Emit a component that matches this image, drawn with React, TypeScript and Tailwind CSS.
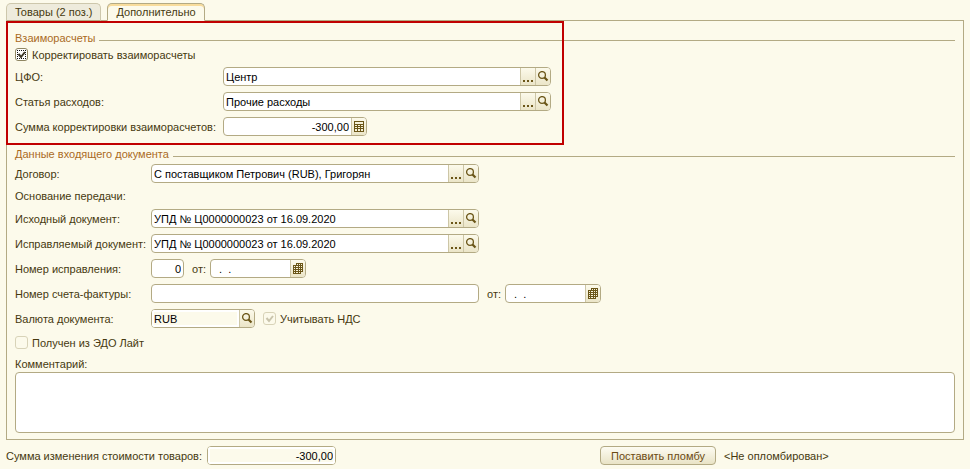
import React, { useState } from 'react';
import clsx from 'clsx';

const SearchIcon = () => (
  <svg width="12" height="12" viewBox="0 0 12 12" fill="none" stroke="#6b5618">
    <circle cx="5" cy="4" r="3.4" strokeWidth="1.3" />
    <path d="M7.5 6.5L10.5 9.5" strokeWidth="2.2" />
  </svg>
);

const DotsIcon = () => (
  <svg width="10" height="12" viewBox="0 0 10 12" fill="#6b5618">
    <path d="M0 9h2v2H0zM4 9h2v2H4zM8 9h2v2H8z" />
  </svg>
);

const CalculatorIcon = () => (
  <svg width="10" height="11" viewBox="0 0 10 11" shapeRendering="crispEdges">
    <path d="M0 0h10v11H0z" fill="#6b5618" />
    <path
      d="M1 1h8v2H1zM1 4h2v1H1zM4 4h2v1H4zM7 4h2v1H7zM1 6h2v1H1zM4 6h2v1H4zM7 6h2v1H7zM1 8h2v2H1zM4 8h2v2H4zM7 8h2v2H7z"
      fill="#f7f3dc"
    />
  </svg>
);

const CalendarIcon = () => (
  <svg width="10" height="11" viewBox="0 0 10 11" shapeRendering="crispEdges">
    <path d="M3 0h7v9H8v2H0V2h3z" fill="#6b5618" />
    <path
      d="M4 1h1v1H4zM6 1h1v1H6zM8 1h1v1H8zM1 3h1v1H1zM3 3h2v1H3zM6 3h1v1H6zM8 3h1v1H8zM1 5h1v1H1zM3 5h2v1H3zM6 5h1v1H6zM8 5h1v1H8zM1 7h1v1H1zM3 7h2v1H3zM6 7h1v1H6zM8 7h1v1H8zM1 9h1v1H1zM3 9h2v1H3zM6 9h1v1H6z"
      fill="#f7f3dc"
    />
  </svg>
);

const ICONS = {
  dots: { icon: <DotsIcon />, title: 'Выбрать' },
  search: { icon: <SearchIcon />, title: 'Открыть' },
  calculator: { icon: <CalculatorIcon />, title: 'Калькулятор' },
  calendar: { icon: <CalendarIcon />, title: 'Календарь' },
};

interface FieldProps {
  id: string;
  value?: string;
  className: string;
  buttons?: (keyof typeof ICONS)[];
  alignRight?: boolean;
  readOnly?: boolean;
}

const Field: React.FC<FieldProps> = ({ id, value = '', className, buttons = [], alignRight, readOnly }) => (
  <div className={clsx('flex h-[19px] overflow-hidden rounded-[4px] border border-[#b3aa84] bg-white', className)}>
    <input
      id={id}
      type="text"
      defaultValue={value}
      readOnly={readOnly}
      className={clsx(
        'min-w-0 flex-1 px-0.5 text-black outline-none',
        alignRight && 'text-right',
        readOnly && 'bg-[#fcfaeb] shadow-[inset_0_0_0_2px_#fff]'
      )}
    />
    {buttons.map(name => (
      <button
        key={name}
        type="button"
        aria-label={ICONS[name].title}
        className="flex w-[15px] shrink-0 items-center justify-center border-l border-[#cdc6a6] bg-linear-to-b from-[#fcfaeb] to-[#ebe5c8]"
      >
        {ICONS[name].icon}
      </button>
    ))}
  </div>
);

interface RowProps {
  id: string;
  label: string;
  labelClass: string;
  children: React.ReactNode;
}

const Row: React.FC<RowProps> = ({ id, label, labelClass, children }) => (
  <div className="flex items-center">
    <label htmlFor={id} className={clsx('shrink-0 whitespace-nowrap', labelClass)}>{label}</label>
    {children}
  </div>
);

interface CheckboxProps {
  id: string;
  label: string;
  checked?: boolean;
  disabled?: boolean;
}

const Checkbox: React.FC<CheckboxProps> = ({ id, label, checked, disabled }) => (
  <div className="flex items-center gap-1">
    <span className="grid size-[13px] shrink-0">
      <input
        id={id}
        type="checkbox"
        defaultChecked={checked}
        disabled={disabled}
        className={clsx(
          'peer col-start-1 row-start-1 size-[13px] appearance-none rounded-[3px] border',
          disabled ? 'border-[#d8d3b8] bg-[#fcfaeb]' : 'border-[#8f8662] bg-white'
        )}
      />
      <svg
        viewBox="0 0 13 13"
        fill="none"
        className="pointer-events-none invisible col-start-1 row-start-1 size-[13px] peer-checked:visible"
      >
        {!disabled && (
          <path d="M2 2.5h9M2 10.5h9M2.5 2v9M10.5 2v9" stroke="#111" strokeDasharray="1 1" shapeRendering="crispEdges" />
        )}
        <path d="M3.5 6l2.5 3L10 4" stroke={disabled ? '#c9c4ac' : '#3d3727'} strokeWidth="2" />
      </svg>
    </span>
    <label htmlFor={id} className="whitespace-nowrap">{label}</label>
  </div>
);

const SectionTitle: React.FC<{ children: React.ReactNode }> = ({ children }) => (
  <div className="flex h-5 items-center gap-1">
    <h2 className="whitespace-nowrap text-[#aa6a1e]">{children}</h2>
    <div className="mt-1 h-px flex-1 bg-[#b3aa84]" />
  </div>
);

const TABS = ['Товары (2 поз.)', 'Дополнительно'];

const App: React.FC = () => {
  const [activeTab, setActiveTab] = useState(1);

  return (
    <div className="min-h-screen bg-[#fcfaeb] px-1.5 pt-[3px] font-['Liberation_Sans',Arial,sans-serif] text-[11px] leading-[14px] text-[#46390f]">
      <div role="tablist" className="flex gap-1.5">
        {TABS.map((tab, index) => (
          <button
            key={tab}
            type="button"
            role="tab"
            aria-selected={activeTab === index}
            onClick={() => setActiveTab(index)}
            className={clsx(
              'relative z-10 h-[18px] overflow-hidden whitespace-nowrap rounded-t-[5px] border px-2',
              activeTab === index
                ? 'border-[#b3aa84] border-b-[#fcfaeb] bg-[#fcfaeb] shadow-[inset_0_2px_0_#f8dc9c]'
                : 'border-[#cdc7ac] border-b-[#b3aa84] bg-[#eeebdc]'
            )}
          >
            {tab}
          </button>
        ))}
      </div>

      <main className="relative -mt-px border border-[#b3aa84] px-2 pt-[7px] pb-1.5">
        <div className="pointer-events-none absolute -left-px top-0 h-[124px] w-[558px] border-2 border-[#c00000]" />

        <section>
          <SectionTitle>Взаиморасчеты</SectionTitle>
          <div className="flex flex-col gap-1.5">
            <div className="flex h-[13px] items-center">
              <Checkbox id="adjust" label="Корректировать взаиморасчеты" checked />
            </div>
            <Row id="center" label="ЦФО:" labelClass="w-[208px]">
              <Field id="center" value="Центр" className="w-[328px]" buttons={['dots', 'search']} />
            </Row>
            <Row id="expense" label="Статья расходов:" labelClass="w-[208px]">
              <Field id="expense" value="Прочие расходы" className="w-[328px]" buttons={['dots', 'search']} />
            </Row>
            <Row id="amount" label="Сумма корректировки взаиморасчетов:" labelClass="w-[208px]">
              <Field id="amount" value="-300,00" className="w-36" buttons={['calculator']} alignRight />
            </Row>
          </div>
        </section>

        <section className="mt-2">
          <SectionTitle>Данные входящего документа</SectionTitle>
          <div className="flex flex-col gap-1.5">
            <Row id="contract" label="Договор:" labelClass="w-[136px]">
              <Field id="contract" value="С поставщиком Петрович (RUB), Григорян" className="w-[328px]" buttons={['dots', 'search']} />
            </Row>
            <p>Основание передачи:</p>
            <Row id="source" label="Исходный документ:" labelClass="w-[136px]">
              <Field id="source" value="УПД № Ц0000000023 от 16.09.2020" className="w-[328px]" buttons={['dots', 'search']} />
            </Row>
            <Row id="corrected" label="Исправляемый документ:" labelClass="w-[136px]">
              <Field id="corrected" value="УПД № Ц0000000023 от 16.09.2020" className="w-[328px]" buttons={['dots', 'search']} />
            </Row>
            <Row id="fix-number" label="Номер исправления:" labelClass="w-[136px]">
              <Field id="fix-number" value="0" className="w-[33px]" alignRight />
              <label htmlFor="fix-date" className="w-[26px] pl-2">от:</label>
              <Field id="fix-date" value="  .  ." className="w-24" buttons={['calendar']} />
            </Row>
            <Row id="invoice" label="Номер счета-фактуры:" labelClass="w-[136px]">
              <Field id="invoice" className="w-[328px]" />
              <label htmlFor="invoice-date" className="w-[26px] pl-2">от:</label>
              <Field id="invoice-date" value="  .  ." className="w-24" buttons={['calendar']} />
            </Row>
            <Row id="currency" label="Валюта документа:" labelClass="w-[136px]">
              <Field id="currency" value="RUB" className="mr-2 w-[104px]" buttons={['search']} readOnly />
              <Checkbox id="vat" label="Учитывать НДС" checked disabled />
            </Row>
            <div className="flex h-[17px] items-center">
              <Checkbox id="edo" label="Получен из ЭДО Лайт" disabled />
            </div>
            <div className="flex flex-col">
              <label htmlFor="comment" className="h-[15px]">Комментарий:</label>
              <textarea
                id="comment"
                className="h-[61px] w-full resize-none rounded-[4px] border border-[#b3aa84] bg-white px-1 text-black outline-none"
              />
            </div>
          </div>
        </section>
      </main>

      <footer className="mt-1.5 flex items-center">
        <label htmlFor="total" className="w-[201px] shrink-0 whitespace-nowrap">Сумма изменения стоимости товаров:</label>
        <Field id="total" value="-300,00" className="w-[129px]" alignRight readOnly />
        <div className="ml-auto flex w-[364px] items-center gap-2">
          <button
            type="button"
            className="h-[19px] w-[116px] rounded-[4px] border border-[#b3aa84] bg-linear-to-b from-[#fdfcf2] to-[#e9e3c6] text-[#6b4a12]"
          >
            Поставить пломбу
          </button>
          <span>&lt;Не опломбирован&gt;</span>
        </div>
      </footer>
    </div>
  );
};

export default App;
